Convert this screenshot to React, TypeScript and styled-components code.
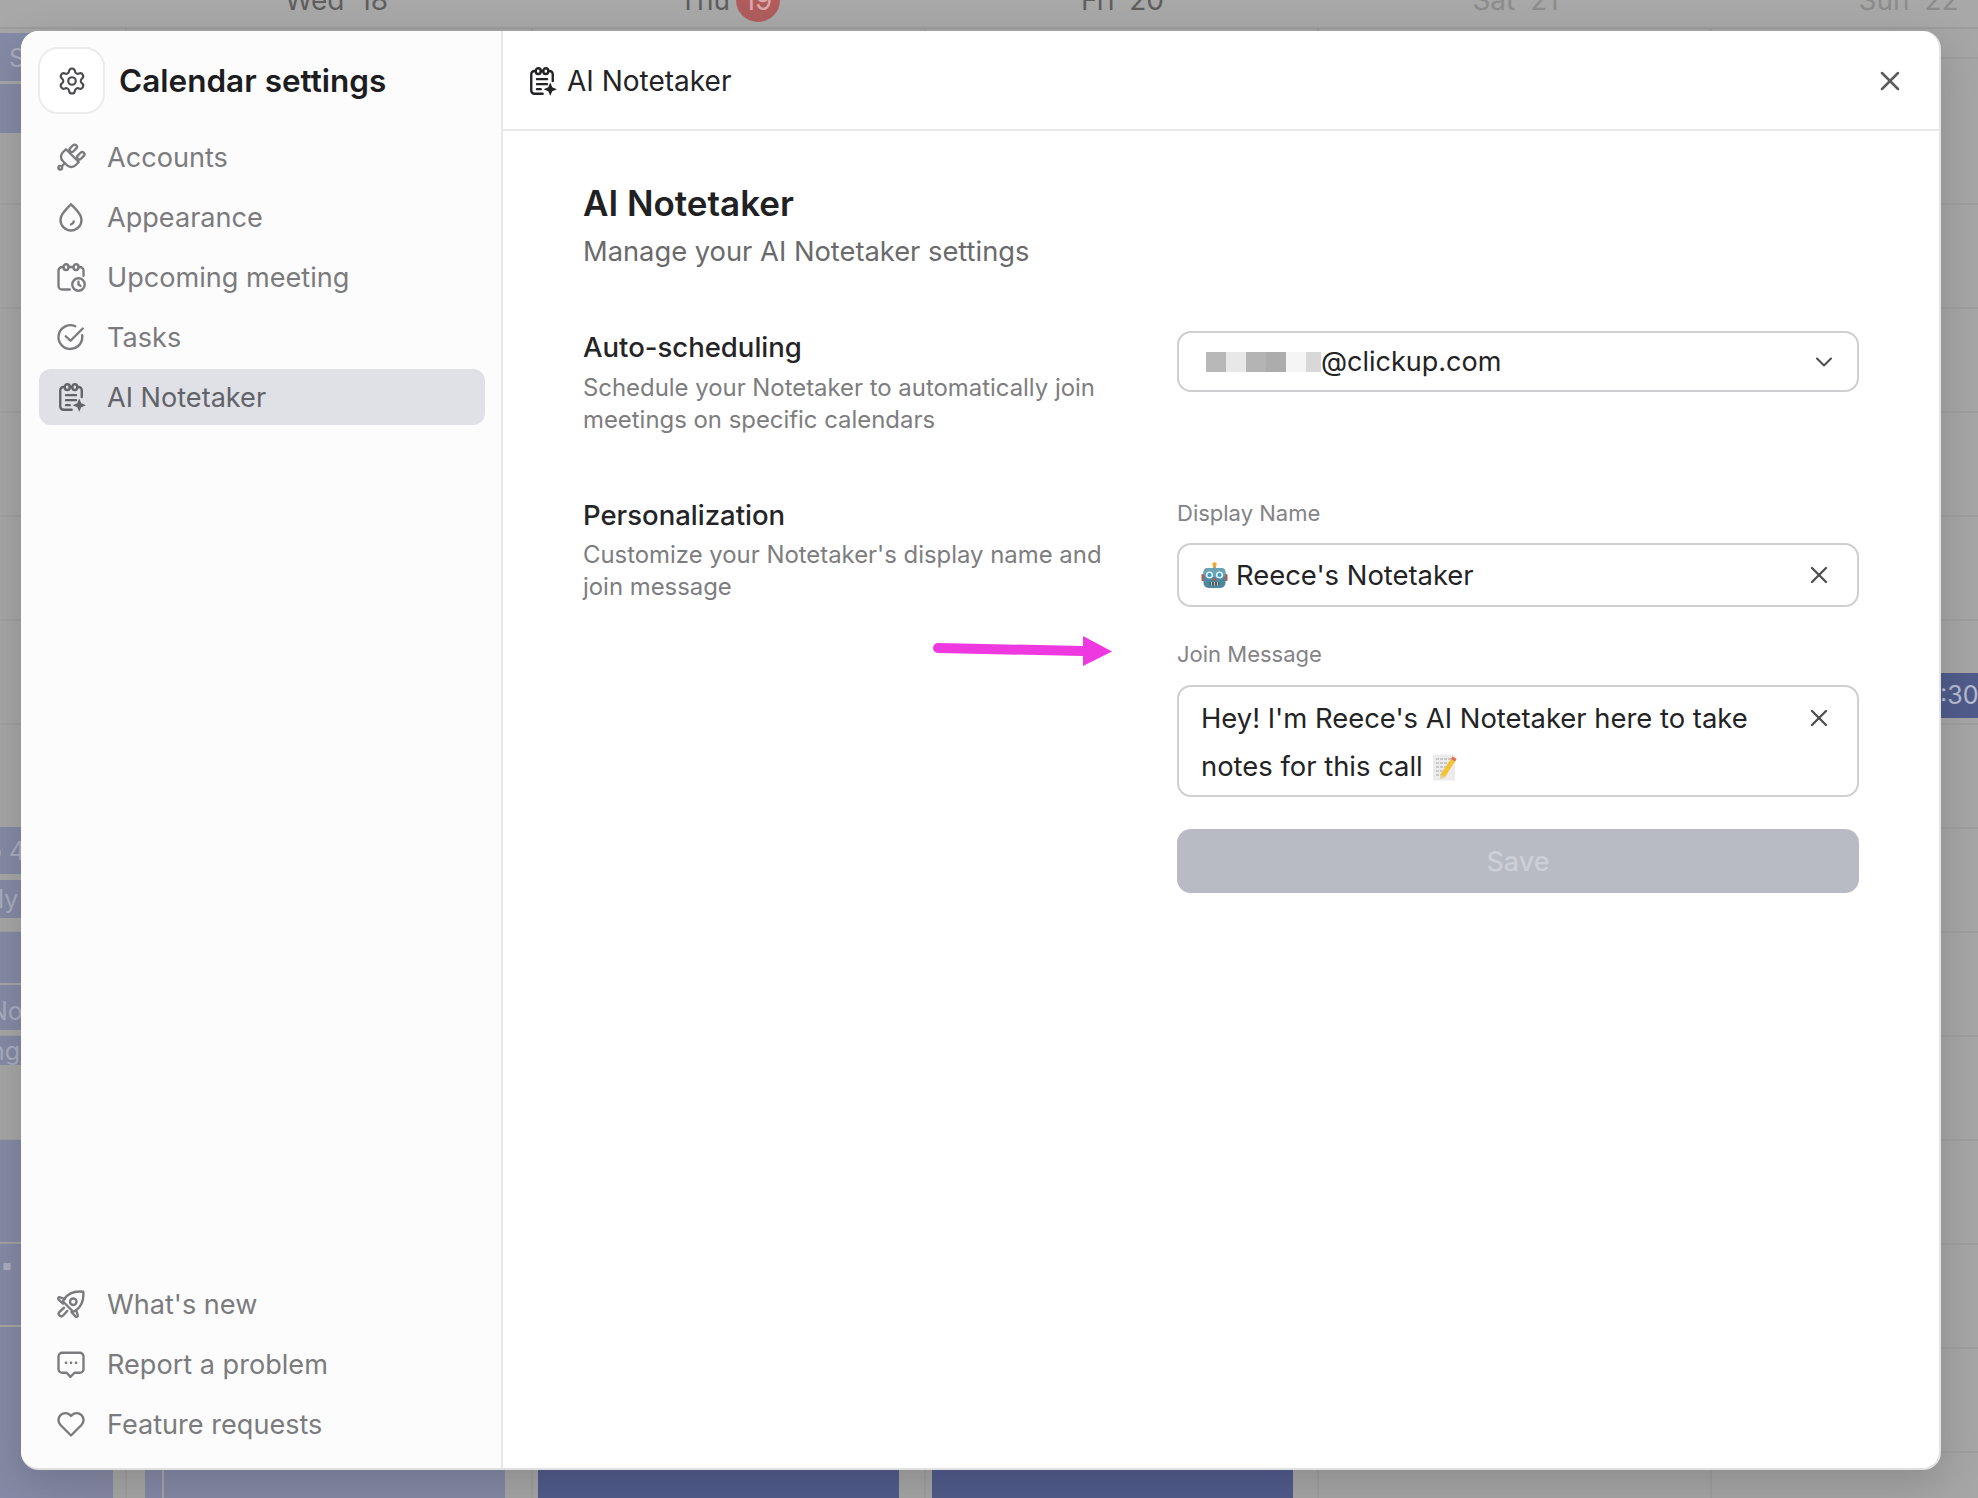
import React from "react";
import styled, { createGlobalStyle } from "styled-components";
import { Settings, X, ChevronDown } from "lucide-react";

const Global = createGlobalStyle`
  html, body { margin: 0; padding: 0; background: #a6a6a6; }
  body { font-family: Inter, "Noto Sans", "Liberation Sans", sans-serif; -webkit-font-smoothing: antialiased; }
  * { box-sizing: border-box; }
`;

const Page = styled.div`
  position: relative;
  width: 1978px;
  height: 1498px;
  overflow: hidden;
  background: #a6a6a6;
`;

/* ---- calendar behind the dialog ---- */
const Calendar = styled.div`
  position: absolute;
  inset: 0;
  background-image:
    repeating-linear-gradient(to bottom, transparent 0 102px, #9f9f9f 102px 104px),
    repeating-linear-gradient(to right, transparent 0 391px, #9f9f9f 391px 393px);
  background-position: 0 101px, 140px 0;
`;
const DayRow = styled.div`
  display: grid;
  grid-template-columns: repeat(5, 393px);
  padding-left: 140px;
  height: 29px;
  border-bottom: 2px solid #9c9c9c;
  background: #a8a8a8;
  overflow: hidden;
`;
const Day = styled.div<{ $dim?: boolean }>`
  display: flex;
  justify-content: center;
  align-items: center;
  gap: 6px;
  height: 30px;
  margin-top: -15px;
  font-size: 28px;
  line-height: 30px;
  word-spacing: 7px;
  color: ${(p) => (p.$dim ? "#8c8c8c" : "#5e5e5e")};
`;
const TodayBadge = styled.span`
  width: 44px;
  height: 44px;
  border-radius: 50%;
  background: #b05c5c;
  color: #dba9a9;
  display: flex;
  align-items: center;
  justify-content: center;
  flex: none;
`;
const Event = styled.div<{ $x: number; $y: number; $w: number; $h: number; $dark?: boolean }>`
  position: absolute;
  left: ${(p) => p.$x}px;
  top: ${(p) => p.$y}px;
  width: ${(p) => p.$w}px;
  height: ${(p) => p.$h}px;
  background: ${(p) => (p.$dark ? "#515c8c" : "#858aa6")};
  color: ${(p) => (p.$dark ? "#b8bcd0" : "#a9adbf")};
  font-size: 25px;
  font-weight: 400;
  line-height: 30px;
  overflow: hidden;
  white-space: nowrap;
`;
const EventText = styled.span<{ $pad: number; $top: number }>`
  display: block;
  margin-left: ${(p) => p.$pad}px;
  padding-top: ${(p) => p.$top}px;
`;

/* ---- dialog ---- */
const Dialog = styled.div`
  position: absolute;
  left: 21px;
  top: 31px;
  width: 1920px;
  height: 1439px;
  display: grid;
  grid-template-columns: 482px 1fr;
  border-radius: 18px;
  overflow: hidden;
  background: #fff;
  border-right: 2px solid #e4e4e4;
  border-bottom: 2px solid #e0e0e0;
`;
const DialogShadow = styled.div`
  position: absolute;
  left: 21px;
  top: 31px;
  width: 1920px;
  height: 1439px;
  border-radius: 18px;
  box-shadow: 0 14px 44px rgba(0, 0, 0, 0.16);
`;
const Sidebar = styled.aside`
  display: flex;
  flex-direction: column;
  background: #fcfcfc;
  border-right: 2px solid #e9e9ea;
  padding: 16px 16px 16px 18px;
`;
const SideHeader = styled.div`
  display: flex;
  align-items: center;
  gap: 14px;
  margin-bottom: 15px;
  margin-left: -1px;
`;
const GearBox = styled.div`
  width: 67px;
  height: 67px;
  border-radius: 20px;
  background: #fff;
  border: 2px solid #ececec;
  display: flex;
  align-items: center;
  justify-content: center;
  color: #4b4b4e;
`;
const SideTitle = styled.h1`
  margin: 0;
  font-size: 31.5px;
  font-weight: 600;
  color: #1d1d1f;
  line-height: 40px;
`;
const NavList = styled.nav`
  display: flex;
  flex-direction: column;
  gap: 4px;
`;
const NavFooter = styled(NavList)`
  margin-top: auto;
`;
const NavItem = styled.a<{ $active?: boolean }>`
  display: flex;
  align-items: center;
  gap: 21px;
  height: 56px;
  padding-left: 17px;
  border-radius: 12px;
  font-size: 27.1px;
  color: ${(p) => (p.$active ? "#626369" : "#7b7b7e")};
  background: ${(p) => (p.$active ? "#e0e1e6" : "transparent")};
`;
const Main = styled.main`
  display: flex;
  flex-direction: column;
  min-width: 0;
`;
const MainHeader = styled.header`
  display: flex;
  align-items: center;
  height: 100px;
  flex: none;
  padding: 2px 33px 0 24px;
  border-bottom: 2px solid #e8e8e9;
  gap: 10px;
  color: #232325;
`;
const HeaderTitle = styled.div`
  font-size: 28px;
  flex: 1;
  color: #232325;
`;
const Close = styled.button`
  background: none;
  border: 0;
  padding: 0;
  display: flex;
  color: #5b5b5e;
`;
const Content = styled.div`
  padding: 50px 80px 0 80px;
`;
const Heading = styled.h2`
  margin: 0;
  font-size: 35px;
  line-height: 44px;
  font-weight: 600;
  color: #212123;
`;
const Sub = styled.p`
  margin: 5px 0 0;
  font-size: 27.3px;
  line-height: 44px;
  color: #6a6a6d;
`;
const SettingRow = styled.section`
  position: relative;
  display: grid;
  grid-template-columns: 594px 682px;
`;
const FirstRow = styled(SettingRow)`
  margin-top: 57px;
  min-height: 105px;
`;
const SecondRow = styled(SettingRow)`
  margin-top: 62px;
`;
const RowTitle = styled.h3`
  margin: 0 0 9px;
  font-size: 27.5px;
  font-weight: 500;
  line-height: 32px;
  color: #252527;
`;
const SecondRowTitle = styled(RowTitle)`
  margin: 1px 0 8px;
`;
const RowText = styled.p`
  margin: 0;
  width: 530px;
  font-size: 23.9px;
  line-height: 32px;
  color: #7d7d80;
`;
const Fields = styled.div`
  display: flex;
  flex-direction: column;
`;
const FieldLabel = styled.label`
  font-size: 22px;
  line-height: 30px;
  color: #838386;
  margin-bottom: 15px;
`;
const Box = styled.div`
  display: flex;
  align-items: center;
  border: 2px solid #cfcfd1;
  border-radius: 14px;
  background: #fff;
  font-size: 27.4px;
  color: #232325;
`;
const SelectBox = styled(Box)`
  height: 61px;
  padding: 0 19px 0 27px;
  justify-content: space-between;
`;
const Email = styled.div`
  display: flex;
  align-items: center;
  font-size: 27px;
`;
const BlurCell = styled.i<{ $c: string; $w?: number }>`
  display: block;
  width: ${(p) => p.$w ?? 20}px;
  height: 20px;
  background: ${(p) => p.$c};
`;
const InputBox = styled(Box)`
  height: 64px;
  padding: 0 24px 0 22px;
  gap: 8px;
  margin-bottom: 32px;
`;
const InputText = styled.span`
  flex: 1;
`;
const AreaBox = styled(Box)`
  height: 112px;
  margin-top: 1px;
  padding: 7px 24px 0 22px;
  align-items: flex-start;
  line-height: 48px;
  margin-bottom: 32px;
`;
const AreaText = styled.div`
  flex: 1;
  max-width: 570px;
`;
const AreaClear = styled.span`
  display: flex;
  height: 48px;
  align-items: center;
  margin-left: auto;
`;
const ClearIcon = styled(X)`
  color: #4f4f52;
  flex: none;
`;
const SaveButton = styled.button`
  height: 64px;
  border: 0;
  border-radius: 14px;
  background: #b8bac4;
  color: #cdcfd7;
  font: 500 27px Inter, sans-serif;
`;
const Arrow = styled.svg`
  position: absolute;
  left: 350px;
  top: 138px;
`;
const InlineEmoji = styled.svg`
  display: inline-block;
  vertical-align: -5px;
  margin-left: 9px;
`;

const Line = styled.svg.attrs({ viewBox: "0 0 24 24", fill: "none", stroke: "currentColor", strokeWidth: 1.9, strokeLinecap: "round", strokeLinejoin: "round" })`
  width: 30px;
  height: 30px;
  flex: none;
`;

const PlugIcon = () => (
  <Line>
    <path d="M8 5.8l10.2 10.2-2.6 2.6a4.8 4.8 0 0 1-6.8 0L5.4 15.2a4.8 4.8 0 0 1 0-6.8Z" />
    <rect x="12" y="1.6" width="3.6" height="6.8" rx="1.8" transform="rotate(45 13.8 5)" />
    <rect x="18" y="7.6" width="3.6" height="6.8" rx="1.8" transform="rotate(45 19.8 11)" />
    <path d="M6.4 17.6 4.6 19.4" />
    <circle cx="3.4" cy="20.6" r="1.5" />
  </Line>
);
const DropIcon = () => (
  <Line>
    <path d="M12 1.8C9 5.2 3.6 9 3.6 14.4a8.4 8.4 0 0 0 16.8 0C20.4 9 15 5.2 12 1.8Z" />
    <path d="M14.2 15.6c-.2 1.2-1 2-2.2 2.3" />
  </Line>
);
const CalClockIcon = () => (
  <Line>
    <path d="M6 4H5a3 3 0 0 0-3 3v12a3 3 0 0 0 3 3h6" />
    <path d="M10 4h4M18 4h1a3 3 0 0 1 3 3v4" />
    <rect x="6" y="1.8" width="4" height="4.6" rx="2" />
    <rect x="14" y="1.8" width="4" height="4.6" rx="2" />
    <circle cx="18" cy="18" r="5" />
    <path d="M18 15.8V18l1.6 1.1" />
  </Line>
);
const CheckIcon = () => (
  <Line>
    <path d="M21 10.5V12a9.5 9.5 0 1 1-5.6-8.6" />
    <path d="M7.8 11.4 11.6 15 21.4 5.2" />
  </Line>
);
const NotesIcon = () => (
  <Line>
    <path d="M7 4H6a2.6 2.6 0 0 0-2.6 2.6v13A2.6 2.6 0 0 0 6 22.2h6.5" />
    <path d="M11 4h2M17 4h1a2.6 2.6 0 0 1 2.6 2.6V12" />
    <rect x="7" y="1.8" width="4" height="4.6" rx="2" />
    <rect x="13" y="1.8" width="4" height="4.6" rx="2" />
    <path d="M8 10.5h8M8 14.5h8M8 18.5h3" />
    <path d="M18.6 13.2l1.6 3.7 3.7 1.6-3.7 1.6-1.6 3.7-1.6-3.7-3.7-1.6 3.7-1.6Z" fill="currentColor" stroke="none" />
  </Line>
);
const RocketIcon = () => (
  <Line>
    <path d="M21.8 2.2c-6.5-.8-12 1.2-15.2 5.8l-1 2 8.2 8.2 2-1c4.6-3.2 6.6-8.5 6-15Z" />
    <circle cx="13.8" cy="10.2" r="2.6" />
    <path d="M7 8 3.2 6.6C2 6.3 1.2 7.6 2.1 8.5l3.5 3.2" />
    <path d="M16 17l1.4 3.8c.3 1.2-1 2-1.9 1.1l-3.2-3.5" />
    <path d="M6.4 15 2.8 18.3a1.9 1.9 0 0 0 2.9 2.9l3.3-3.6" />
  </Line>
);
const ChatIcon = () => (
  <Line>
    <path d="M5 3h14a3 3 0 0 1 3 3v10a3 3 0 0 1-3 3h-4.2L11.5 22.4 8.6 19H5a3 3 0 0 1-3-3V6a3 3 0 0 1 3-3Z" />
    <path d="M8 11h.01M12 11h.01M16 11h.01" strokeWidth="2.2" />
  </Line>
);
const HeartIcon = () => (
  <Line>
    <path d="M12 21.2 3.6 12.8a5.6 5.6 0 0 1 0-7.9 5.5 5.5 0 0 1 7.8 0l.6.6.6-.6a5.5 5.5 0 0 1 7.8 0 5.6 5.6 0 0 1 0 7.9Z" />
  </Line>
);

const RobotEmoji = () => (
  <svg width="27" height="27" viewBox="0 0 27 27">
    <rect x="12.2" y="2.5" width="2.6" height="4" fill="#b89a5a" />
    <circle cx="13.5" cy="2.4" r="2.2" fill="#f0a830" />
    <rect x="0.5" y="12" width="3" height="7" rx="1" fill="#c2543e" />
    <rect x="23.5" y="12" width="3" height="7" rx="1" fill="#c2543e" />
    <rect x="2.5" y="6" width="22" height="20" rx="5" fill="#4e8a9e" />
    <rect x="2.5" y="6" width="22" height="9" rx="4" fill="#6ba3b4" />
    <circle cx="8.5" cy="13" r="3.6" fill="#dff2f7" />
    <circle cx="8.5" cy="13" r="2" fill="#3f97c8" />
    <circle cx="18.5" cy="13" r="3.6" fill="#dff2f7" />
    <circle cx="18.5" cy="13" r="2" fill="#3f97c8" />
    <path d="M13.5 15.5l2 3h-4Z" fill="#c8523c" />
    <rect x="8.5" y="20" width="10" height="3.6" rx="1" fill="#4b5a60" />
    <path d="M10.5 20v3.6M13.5 20v3.6M16.5 20v3.6" stroke="#c6cfd2" strokeWidth="1" />
  </svg>
);
const MemoEmoji = () => (
  <InlineEmoji width="26" height="27" viewBox="0 0 26 27">
    <rect x="1" y="0.5" width="22" height="26" fill="#ececec" />
    <path d="M4 5h15M4 9h15M4 13h10M4 17h8M4 21h8" stroke="#a3a3a3" strokeWidth="1.2" strokeDasharray="3 1" />
    <path d="M20.5 2.5l4 2.5L13 23l-4.5 2 .2-4.8Z" fill="#f4c430" />
    <path d="M20.5 2.5l4 2.5-1.5 2.4-4-2.5Z" fill="#e56a63" />
    <path d="M8.7 20.2l4.3 2.8-4.5 2Z" fill="#e9cfa6" />
  </InlineEmoji>
);

const events: { x: number; y: number; w: number; h: number; pad: number; top: number; text?: string; dark?: boolean }[] = [
  { x: 0, y: 33, w: 140, h: 48, pad: 9, top: 10, text: "S" },
  { x: 0, y: 84, w: 140, h: 49, pad: 0, top: 0 },
  { x: 0, y: 827, w: 140, h: 47, pad: -13, top: 9, text: "o 4" },
  { x: 0, y: 880, w: 140, h: 38, pad: -2, top: 4, text: "ly" },
  { x: 0, y: 932, w: 140, h: 51, pad: 0, top: 0 },
  { x: 0, y: 985, w: 140, h: 45, pad: -11, top: 11, text: "No" },
  { x: 0, y: 1036, w: 140, h: 29, pad: -10, top: 0, text: "ng" },
  { x: 0, y: 1140, w: 113, h: 102, pad: 0, top: 0 },
  { x: 0, y: 1244, w: 113, h: 81, pad: 0, top: 6, text: "▪ /" },
  { x: 0, y: 1327, w: 113, h: 171, pad: 0, top: 0 },
  { x: 145, y: 1400, w: 17, h: 98, pad: 0, top: 0 },
  { x: 164, y: 1400, w: 341, h: 98, pad: 0, top: 0 },
  { x: 538, y: 1400, w: 361, h: 98, pad: 0, top: 0, dark: true },
  { x: 932, y: 1400, w: 361, h: 98, pad: 0, top: 0, dark: true },
  { x: 1920, y: 673, w: 58, h: 45, pad: 20, top: 7, text: ":30p", dark: true },
];

export default function App() {
  return (
    <Page>
      <Global />
      <Calendar>
        <DayRow>
          <Day>Wed 18</Day>
          <Day>
            Thu <TodayBadge>19</TodayBadge>
          </Day>
          <Day>Fri 20</Day>
          <Day $dim>Sat 21</Day>
          <Day $dim>Sun 22</Day>
        </DayRow>
        {events.map((e, i) => (
          <Event key={i} $x={e.x} $y={e.y} $w={e.w} $h={e.h} $dark={e.dark}>
            {e.text && (
              <EventText $pad={e.pad} $top={e.top}>
                {e.text}
              </EventText>
            )}
          </Event>
        ))}
      </Calendar>
      <DialogShadow />
      <Dialog>
        <Sidebar>
          <SideHeader>
            <GearBox>
              <Settings size={30} strokeWidth={1.7} />
            </GearBox>
            <SideTitle>Calendar settings</SideTitle>
          </SideHeader>
          <NavList>
            <NavItem><PlugIcon />Accounts</NavItem>
            <NavItem><DropIcon />Appearance</NavItem>
            <NavItem><CalClockIcon />Upcoming meeting</NavItem>
            <NavItem><CheckIcon />Tasks</NavItem>
            <NavItem $active><NotesIcon />AI Notetaker</NavItem>
          </NavList>
          <NavFooter>
            <NavItem><RocketIcon />What's new</NavItem>
            <NavItem><ChatIcon />Report a problem</NavItem>
            <NavItem><HeartIcon />Feature requests</NavItem>
          </NavFooter>
        </Sidebar>
        <Main>
          <MainHeader>
            <NotesIcon />
            <HeaderTitle>AI Notetaker</HeaderTitle>
            <Close aria-label="Close">
              <X size={32} strokeWidth={1.9} />
            </Close>
          </MainHeader>
          <Content>
            <Heading>AI Notetaker</Heading>
            <Sub>Manage your AI Notetaker settings</Sub>
            <FirstRow>
              <div>
                <RowTitle>Auto-scheduling</RowTitle>
                <RowText>Schedule your Notetaker to automatically join meetings on specific calendars</RowText>
              </div>
              <Fields>
                <SelectBox>
                  <Email>
                    <BlurCell $c="#b8b8b8" />
                    <BlurCell $c="#e8e8e8" />
                    <BlurCell $c="#b4b4b4" />
                    <BlurCell $c="#acacac" />
                    <BlurCell $c="#f5f5f5" />
                    <BlurCell $c="#d8d8d8" $w={15} />
                    @clickup.com
                  </Email>
                  <ChevronDown size={28} strokeWidth={1.8} color="#4f4f52" />
                </SelectBox>
              </Fields>
            </FirstRow>
            <SecondRow>
              <div>
                <SecondRowTitle>Personalization</SecondRowTitle>
                <RowText>Customize your Notetaker's display name and join message</RowText>
              </div>
              <Arrow width="180" height="32" viewBox="0 0 180 32">
                <path d="M5 7 150 10V0L179 15.5 150 30V20L5 17A5 5 0 0 1 5 7Z" fill="#ee38e0" />
              </Arrow>
              <Fields>
                <FieldLabel>Display Name</FieldLabel>
                <InputBox>
                  <RobotEmoji />
                  <InputText>Reece's Notetaker</InputText>
                  <ClearIcon size={28} strokeWidth={2} />
                </InputBox>
                <FieldLabel>Join Message</FieldLabel>
                <AreaBox>
                  <AreaText>
                    Hey! I'm Reece's AI Notetaker here to take notes for this call
                    <MemoEmoji />
                  </AreaText>
                  <AreaClear>
                    <ClearIcon size={28} strokeWidth={2} />
                  </AreaClear>
                </AreaBox>
                <SaveButton>Save</SaveButton>
              </Fields>
            </SecondRow>
          </Content>
        </Main>
      </Dialog>
    </Page>
  );
}
